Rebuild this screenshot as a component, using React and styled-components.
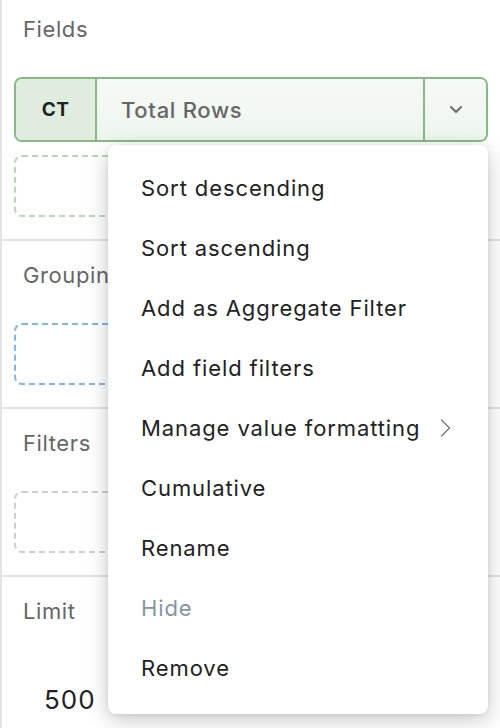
import React from "react";
import styled, { createGlobalStyle } from "styled-components";

const GlobalStyle = createGlobalStyle`
  html, body {
    margin: 0;
    padding: 0;
    background: #ffffff;
  }
  body {
    font-family: Inter, "Noto Sans", "Liberation Sans", sans-serif;
    -webkit-font-smoothing: antialiased;
  }
`;

const menuItems = [
  { label: "Sort descending" },
  { label: "Sort ascending" },
  { label: "Add as Aggregate Filter" },
  { label: "Add field filters" },
  { label: "Manage value formatting", submenu: true },
  { label: "Cumulative" },
  { label: "Rename" },
  { label: "Hide", muted: true },
  { label: "Remove" },
];

export default function App() {
  return (
    <>
      <GlobalStyle />
      <Panel>
        <Section $first>
          <Label>Fields</Label>
          <FieldPill>
            <TypeTag>CT</TypeTag>
            <FieldName>Total Rows</FieldName>
            <PillToggle>
              <svg width="14" height="9" viewBox="0 0 14 9" fill="none">
                <path
                  d="M2 2l5 5 5-5"
                  stroke="#6b6b6b"
                  strokeWidth="2"
                  strokeLinecap="round"
                  strokeLinejoin="round"
                />
              </svg>
            </PillToggle>
          </FieldPill>
          <DropZone $color="#b4dab4" />
        </Section>
        <Section>
          <Label>Grouping</Label>
          <DropZone $color="#7fb5f2" />
        </Section>
        <Section>
          <Label>Filters</Label>
          <DropZone $color="#cfcfcf" />
        </Section>
        <Section $last>
          <Label>Limit</Label>
          <LimitValue>500</LimitValue>
        </Section>

        <Menu>
          {menuItems.map((item) => (
            <MenuItem key={item.label} $muted={item.muted}>
              <span>{item.label}</span>
              {item.submenu && (
                <svg width="12" height="20" viewBox="0 0 12 20" fill="none">
                  <path
                    d="M2.5 2l8 8-8 8"
                    stroke="#7a7a7a"
                    strokeWidth="1.4"
                    strokeLinecap="round"
                    strokeLinejoin="round"
                  />
                </svg>
              )}
            </MenuItem>
          ))}
        </Menu>
      </Panel>
    </>
  );
}

const Panel = styled.div`
  position: relative;
  width: 498px;
  height: 728px;
  overflow: hidden;
  border-left: 2px solid #e3e3e3;
  background: #ffffff;
`;

const Section = styled.div`
  display: flex;
  flex-direction: column;
  padding: ${(p) => (p.$first ? "15px" : "20px")} 12px 22px;
  border-bottom: ${(p) => (p.$last ? "none" : "2px solid #e3e3e3")};
`;

const Label = styled.div`
  font-size: 22px;
  line-height: 28px;
  letter-spacing: 0.6px;
  color: #666666;
  margin-left: 9px;
  margin-bottom: 34px;
`;

const FieldPill = styled.div`
  display: flex;
  height: 61px;
  border: 2px solid #88b888;
  border-radius: 8px;
  overflow: hidden;
  margin-bottom: 13px;
`;

const TypeTag = styled.div`
  width: 79px;
  display: flex;
  align-items: center;
  justify-content: center;
  background: #dfeddf;
  border-right: 2px solid #88b888;
  font-size: 19px;
  font-weight: 700;
  letter-spacing: 0.5px;
  color: #222222;
`;

const FieldName = styled.div`
  flex: 1;
  display: flex;
  align-items: center;
  padding-left: 24px;
  background: linear-gradient(#f6faf6, #eef5ee);
  font-size: 22px;
  font-weight: 500;
  letter-spacing: 0.7px;
  color: #666666;
`;

const PillToggle = styled.div`
  width: 61px;
  display: flex;
  align-items: center;
  justify-content: center;
  background: linear-gradient(#f6faf6, #eef5ee);
  border-left: 2px solid #88b888;
`;

const DropZone = styled.div`
  height: 58px;
  border: 2px dashed ${(p) => p.$color};
  border-radius: 8px;
`;

const LimitValue = styled.div`
  font-size: 26px;
  line-height: 32px;
  letter-spacing: 1px;
  color: #222222;
  margin: 25px 0 0 30px;
`;

const Menu = styled.div`
  position: absolute;
  top: 145px;
  left: 106px;
  width: 380px;
  box-sizing: border-box;
  padding: 13px 0 16px;
  background: #ffffff;
  border-radius: 8px;
  box-shadow: 0 6px 22px rgba(0, 0, 0, 0.22), 0 1px 4px rgba(0, 0, 0, 0.08);
`;

const MenuItem = styled.div`
  height: 60px;
  display: flex;
  align-items: center;
  justify-content: space-between;
  padding: 0 37px 0 33px;
  font-size: 22px;
  letter-spacing: 0.9px;
  color: ${(p) => (p.$muted ? "#8894a0" : "#222222")};
  cursor: pointer;
`;
